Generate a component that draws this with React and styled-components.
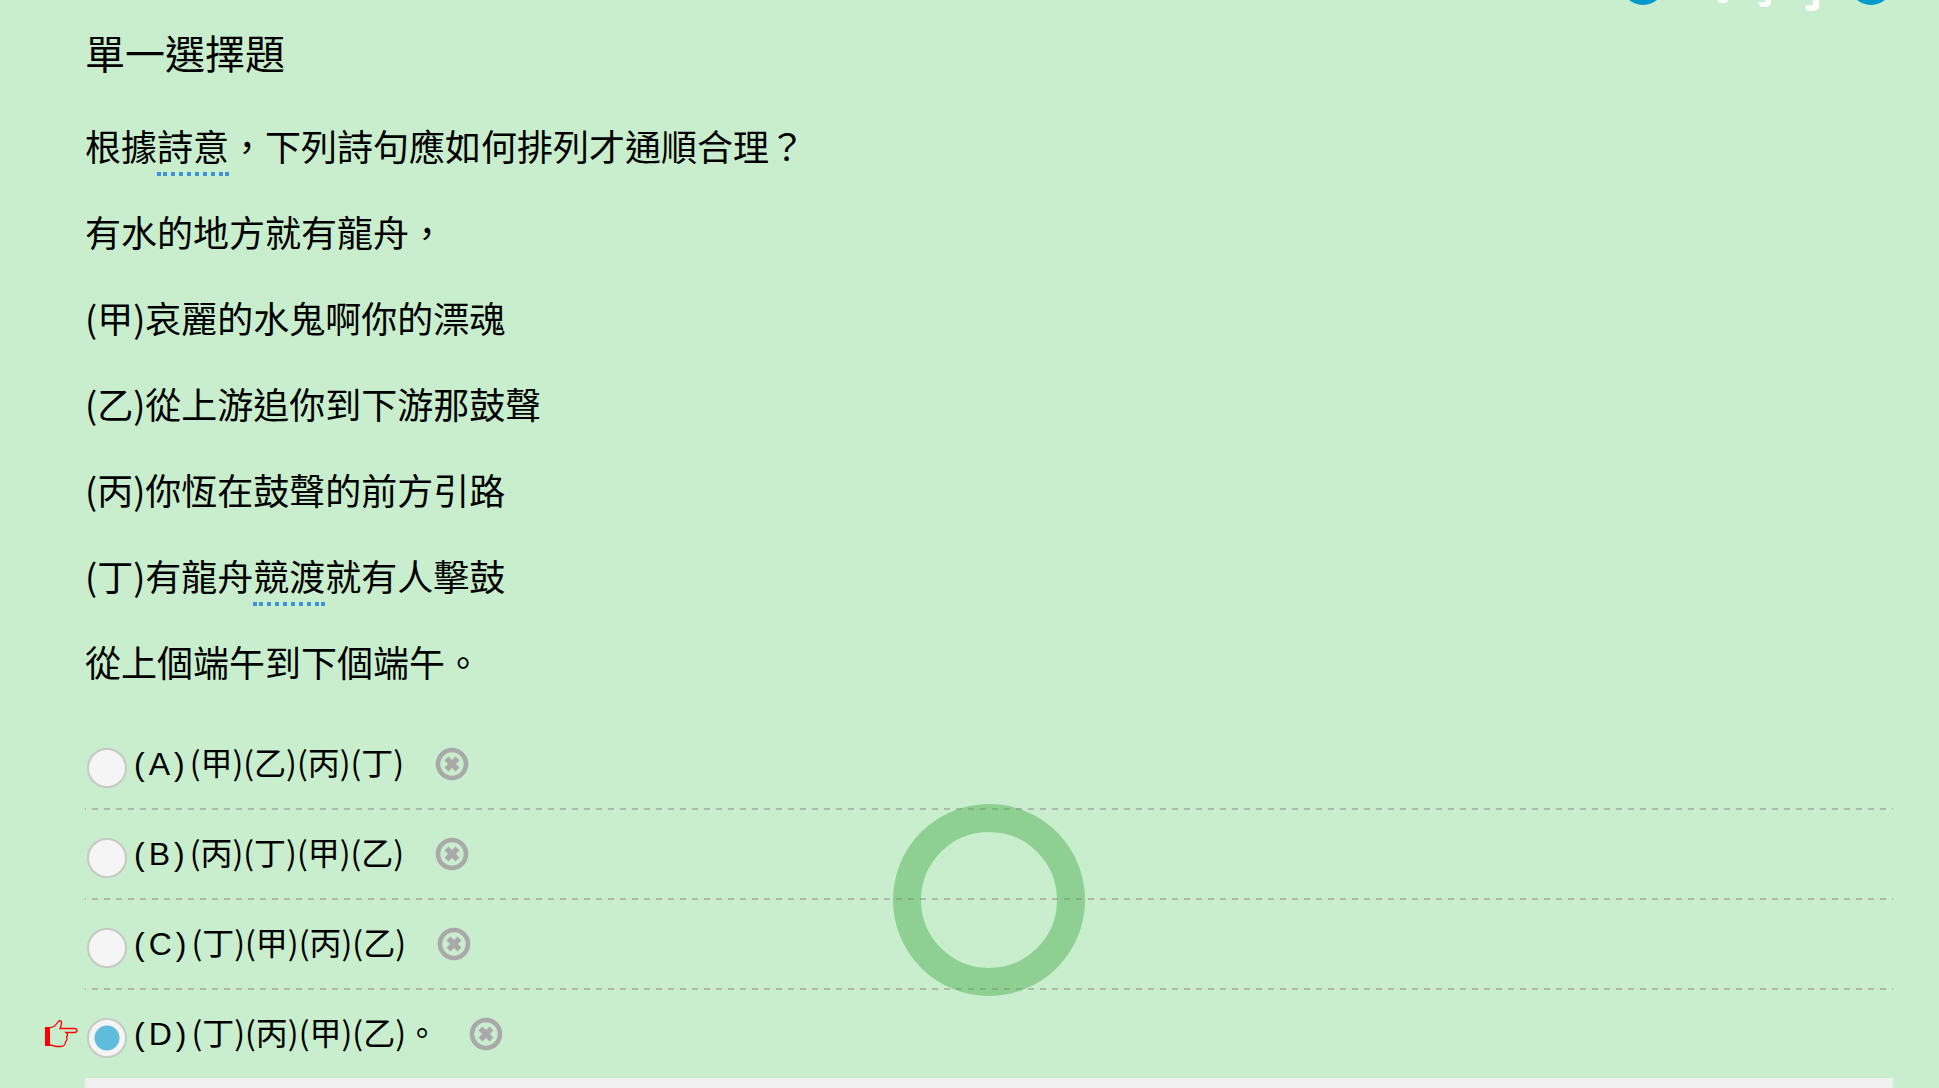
import React, { useState } from "react";
import styled, { createGlobalStyle } from "styled-components";

const GlobalStyle = createGlobalStyle`
  *, *::before, *::after { box-sizing: border-box; }
  html, body { margin: 0; background: #c8eecd; }
  body {
    color: #000;
    font-family: "Noto Sans CJK TC", "Liberation Sans", sans-serif;
    overflow: hidden;
  }
`;

const Page = styled.main`
  position: relative;
  height: 100vh;
  overflow: hidden;
  padding: 0 46px 0 85px;
`;

const SizeBar = styled.div`
  display: flex;
  justify-content: flex-end;
  align-items: center;
  height: 44px;
  margin: -39px 0 0;
`;

const RoundButton = styled.button`
  width: 44px;
  height: 44px;
  padding: 0;
  border: 0;
  border-radius: 50%;
  background: #0099cc;
`;

const Sizes = styled.div`
  display: flex;
  align-items: center;
  gap: 5px;
  margin: 0 10px 0 44px;
  padding-top: 6px;
`;

const SizeButton = styled.button`
  padding: 0;
  border: 0;
  background: none;
  color: #fff;
  font: 700 ${(p) => p.$size}px/48px "Noto Sans CJK TC", sans-serif;
`;

const Title = styled.h1`
  margin: 17px 0 20px;
  font-size: 40px;
  line-height: 60px;
  font-weight: 400;
`;

const Passage = styled.div`
  font-size: 36px;
  line-height: 86px;
`;

const Line = styled.p`
  margin: 0;
`;

const Term = styled.a`
  color: inherit;
  text-decoration: none;
  padding-bottom: 5px;
  background:
    linear-gradient(#3f92d9, #3f92d9) 0 100% / 4px 4px no-repeat,
    linear-gradient(#3f92d9, #3f92d9) 100% 100% / 4px 4px no-repeat,
    linear-gradient(90deg, #3f92d9 4px, transparent 4px) 6px 100% / 8px 4px repeat-x;
`;

const Options = styled.form`
  margin-top: 16px;
`;

const Option = styled.div`
  position: relative;
  display: flex;
  align-items: flex-start;
  height: ${(p) => (p.$last ? "88px" : "90px")};
  padding: 17px 0 0 2px;
  background: ${(p) =>
    p.$last
      ? "none"
      : "linear-gradient(90deg, #adb9a9 6px, transparent 6px) 7px 100% / 12px 2px repeat-x"};
`;

const Radio = styled.input`
  appearance: none;
  flex: none;
  width: 40px;
  height: 40px;
  margin: 11px 0 0;
  border: 2px solid #c6c9c6;
  border-radius: 50%;
  background: #f5f5f5;
  &:checked {
    background: radial-gradient(circle, #5fbddb 12px, #f5f5f5 13px);
  }
`;

const OptionLabel = styled.label`
  display: flex;
  align-items: baseline;
  margin: 0 31px 0 7px;
  font-size: 32px;
  line-height: 48px;
  white-space: nowrap;
`;

const Letter = styled.span`
  display: inline-flex;
  gap: 4px;
  margin-right: 5px;
  font-family: "Liberation Sans", sans-serif;
`;

const RemoveButton = styled.button`
  display: flex;
  margin-top: 10px;
  padding: 0;
  border: 0;
  background: none;
`;

const Pointer = styled.svg`
  position: absolute;
  left: -41px;
  top: 29px;
  width: 34px;
  height: 30px;
`;

const Footer = styled.div`
  height: 20px;
  background: #f0f0f0;
`;

const TouchRing = styled.div`
  position: absolute;
  left: 893px;
  top: 804px;
  width: 192px;
  height: 192px;
  border: 28px solid rgba(76, 175, 80, 0.47);
  border-radius: 50%;
  pointer-events: none;
`;

const CrossIcon = () => (
  <svg width="34" height="34" viewBox="0 0 34 34" aria-hidden="true">
    <circle cx="17" cy="17" r="14" fill="none" stroke="#a9a9a9" strokeWidth="4.6" />
    <path d="M11.5 11.5 22.5 22.5M22.5 11.5 11.5 22.5" stroke="#a9a9a9" strokeWidth="5.6" />
  </svg>
);

const options = [
  ["A", "(甲)(乙)(丙)(丁)"],
  ["B", "(丙)(丁)(甲)(乙)"],
  ["C", "(丁)(甲)(丙)(乙)"],
  ["D", "(丁)(丙)(甲)(乙)。"],
];

export default function App() {
  const [choice, setChoice] = useState("D");
  return (
    <>
      <GlobalStyle />
      <Page>
        <SizeBar>
          <RoundButton type="button" aria-label="縮小" />
          <Sizes>
            <SizeButton type="button" $size={34}>字</SizeButton>
            <SizeButton type="button" $size={40}>字</SizeButton>
            <SizeButton type="button" $size={46}>字</SizeButton>
          </Sizes>
          <RoundButton type="button" aria-label="放大" />
        </SizeBar>
        <Title>單一選擇題</Title>
        <Passage>
          <Line>根據<Term href="#poem">詩意</Term>，下列詩句應如何排列才通順合理？</Line>
          <Line>有水的地方就有龍舟，</Line>
          <Line>(甲)哀麗的水鬼啊你的漂魂</Line>
          <Line>(乙)從上游追你到下游那鼓聲</Line>
          <Line>(丙)你恆在鼓聲的前方引路</Line>
          <Line>(丁)有龍舟<Term href="#race">競渡</Term>就有人擊鼓</Line>
          <Line>從上個端午到下個端午。</Line>
        </Passage>
        <Options>
          {options.map(([id, text], i) => (
            <Option key={id} $last={i === options.length - 1}>
              {choice === id && (
                <Pointer viewBox="0 0 34 30" aria-hidden="true">
                  <path d="M1 8h5v19H1z" fill="#f00" />
                  <path
                    d="M6 8.500C9 8.500 12 6 13.500 3.500C14.500 1.500 17 1 17.500 3C18 5 16.500 7.500 16 9.500H30C34 9.500 34 13.500 30 13.500H22C24 15 24 17 22.500 18C23.500 20 23 22 21.500 22.500C22 25 20 27.500 17 27.500H13C10 27.500 8.500 26 6 26"
                    fill="none"
                    stroke="#f00"
                    strokeWidth="1.300"
                  />
                </Pointer>
              )}
              <Radio
                type="radio"
                name="answer"
                id={`answer-${id}`}
                checked={choice === id}
                onChange={() => setChoice(id)}
              />
              <OptionLabel htmlFor={`answer-${id}`}>
                <Letter><span>(</span><span>{id}</span><span>)</span></Letter>
                {text}
              </OptionLabel>
              <RemoveButton type="button" aria-label={`刪去 ${id}`}>
                <CrossIcon />
              </RemoveButton>
            </Option>
          ))}
        </Options>
        <Footer />
        <TouchRing />
      </Page>
    </>
  );
}
